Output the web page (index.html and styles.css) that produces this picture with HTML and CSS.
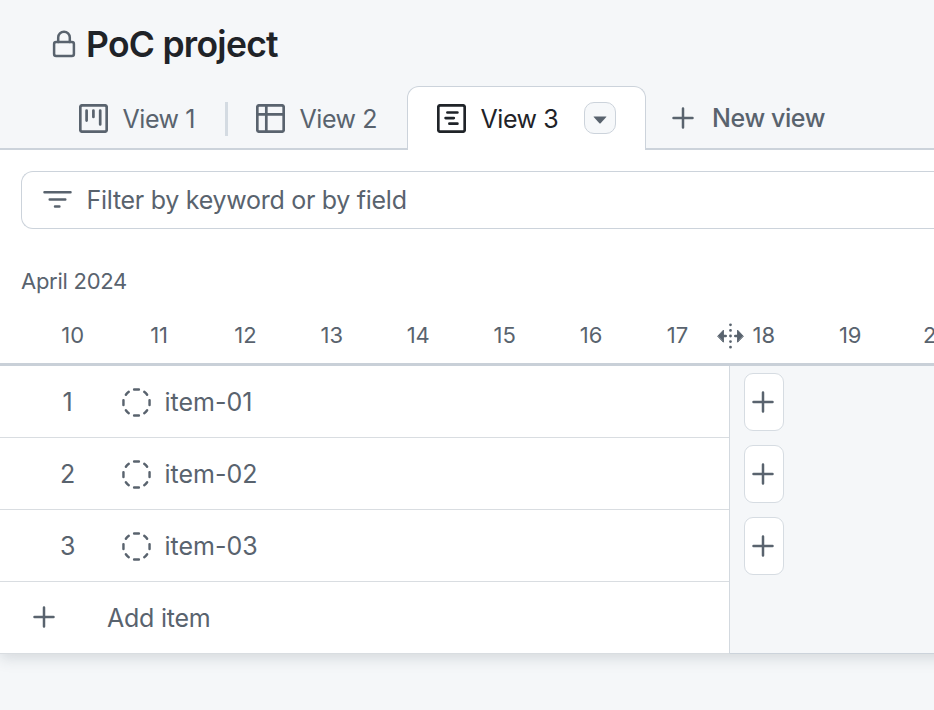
FILE: index.html
```html
<!DOCTYPE html>
<html lang="en">
<head>
<meta charset="utf-8">
<title>PoC project</title>
<link rel="stylesheet" href="styles.css">
</head>
<body>
<svg class="defs" width="0" height="0">
  <symbol id="plus" viewBox="0 0 22 22"><path d="M11 1.5v19M1.5 11h19"/></symbol>
  <symbol id="draft" viewBox="0 0 30 30">
    <path d="M12.5 1.5h5M12.5 28.5h5M1.5 12.5v5M28.5 12.5v5M4 7Q5.2 5.2 7 4M23 4Q24.8 5.2 26 7M4 23Q5.2 24.8 7 26M26 23Q24.8 24.8 23 26"/>
  </symbol>
</svg>
<header class="header">
  <h1 class="title">
    <svg class="icon lock" viewBox="0 0 24 28"><rect x="2.1" y="11.9" width="19.8" height="14.1" rx="2"/><path d="M6.2 12V7.5a5.8 5.8 0 0 1 11.6 0V12"/></svg>
    <span class="title-text">PoC project</span>
  </h1>
  <nav class="tabs">
    <a class="tab tab-first">
      <svg class="icon view-icon" viewBox="0 0 29 29"><rect x="1.3" y="1.3" width="26.4" height="26.4" rx="2"/><path d="M7.6 6.6v10M14.4 6.6v6.4M21.2 6.6v13.8"/></svg>
      <span class="label">View 1</span>
    </a>
    <span class="divider"></span>
    <a class="tab tab-second">
      <svg class="icon view-icon" viewBox="0 0 29 29"><rect x="1.3" y="1.3" width="26.4" height="26.4" rx="2"/><path d="M10.3 1.5v26M1.5 10.3h26"/></svg>
      <span class="label">View 2</span>
    </a>
    <a class="tab tab-active">
      <svg class="icon view-icon" viewBox="0 0 29 29"><rect x="1.3" y="1.3" width="26.4" height="26.4" rx="2"/><path d="M10.4 8.5h10M8.6 14.1h8.2M12.4 19.7h8"/></svg>
      <span class="label">View 3</span>
      <span class="caret"><svg viewBox="0 0 14 8"><path d="M1 .5h12q.8 0 .3.6L7.6 7.2q-.6.6-1.2 0L.7 1.100Q.2.5 1 .5Z"/></svg></span>
    </a>
    <a class="tab tab-new">
      <svg class="icon plus"><use href="#plus"/></svg>
      <span class="label label-new">New view</span>
    </a>
  </nav>
</header>
<main class="board">
  <div class="filter">
    <svg class="icon filter-icon" viewBox="0 0 30 20"><path d="M1.5 2h27M6.900 9.500h16.200M12.400 16.700h4.600"/></svg>
    <span class="filter-text">Filter by keyword or by field</span>
  </div>
  <div class="month">April 2024</div>
  <div class="days">
    <span>10</span><span>11</span><span>12</span><span>13</span><span>14</span><span>15</span><span>16</span><span>17</span><span>18</span><span>19</span><span>20</span>
    <svg class="resize" viewBox="0 0 27 28">
      <path class="heads" d="M.9 14 6.400 8.200V19.800ZM26.100 14 20.600 8.200V19.800Z"/>
      <path class="stem" d="M6 14h2.700M21 14h-2.700"/>
      <path class="dots" d="M13.500 2.800v23"/>
    </svg>
  </div>
  <div class="table">
    <div class="items">
      <div class="row"><span class="num">1</span><svg class="icon draft"><use href="#draft"/></svg><span class="name">item-01</span></div>
      <div class="row"><span class="num">2</span><svg class="icon draft"><use href="#draft"/></svg><span class="name">item-02</span></div>
      <div class="row"><span class="num">3</span><svg class="icon draft"><use href="#draft"/></svg><span class="name">item-03</span></div>
      <div class="row add"><svg class="icon plus"><use href="#plus"/></svg><span class="add-text">Add item</span></div>
    </div>
    <div class="timeline">
      <span class="add-date"><svg class="icon plus"><use href="#plus"/></svg></span>
      <span class="add-date"><svg class="icon plus"><use href="#plus"/></svg></span>
      <span class="add-date"><svg class="icon plus"><use href="#plus"/></svg></span>
    </div>
  </div>
</main>
</body>
</html>
```
FILE: styles.css
```css
* { box-sizing: border-box; }
body {
  margin: 0;
  width: 934px;
  height: 710px;
  overflow: hidden;
  background: #f5f7f9;
  color: #59636e;
  font: 25px/32px Inter, "Liberation Sans", sans-serif;
  white-space: nowrap;
}
.defs { display: none; }
.icon {
  display: block;
  flex: none;
  fill: none;
  stroke: #59636e;
  stroke-width: 2.7;
  stroke-linecap: round;
  stroke-linejoin: round;
}
.header { height: 150px; display: flex; flex-direction: column; }
.title {
  display: flex;
  align-items: center;
  margin: 0;
  height: 86px;
  padding-left: 52px;
  color: #1f2328;
  font-size: 35.5px;
  font-weight: 600;
}
.title-text { margin: 3px 0 0 10px; letter-spacing: -.73px; }
.lock { width: 24px; height: 28px; stroke-width: 2.5; margin-top: 2px; }
.tabs { display: flex; height: 64px; }
.tab { display: flex; align-items: center; height: 64px; padding-top: 1px; border-bottom: 2px solid #ccd3db; }
.tab-first { width: 225px; padding-left: 79px; }
.view-icon { width: 29px; height: 29px; margin-top: 1px; }
.label { margin-left: 14.4px; margin-top: 2px; letter-spacing: -.4px; }
.divider { width: 3px; border-bottom: 2px solid #ccd3db; background: linear-gradient(#d4dbe2, #d4dbe2) 0 16px / 3px 34px no-repeat; }
.tab-second { width: 179px; padding-left: 28px; }
.tab-active {
  width: 239px;
  padding: 0 0 1px 29px;
  background: #fff;
  color: #1f2328;
  border: 1px solid #ccd3db;
  border-bottom: 0;
  border-radius: 12px 12px 0 0;
}
.tab-active .icon { stroke: #1f2328; }
.caret {
  display: flex;
  align-items: center;
  justify-content: center;
  width: 32px;
  height: 32px;
  margin-left: auto;
  margin-right: 29px;
  background: #f6f8fa;
  border: 1px solid #ccd3db;
  border-radius: 10px;
}
.caret svg { width: 14px; height: 8px; margin-top: 3px; fill: #59636e; }
.tab-new { flex: 1; padding-left: 26px; font-weight: 500; }
.plus { width: 22px; height: 22px; stroke-width: 2.5; }
.label-new { margin: 0 0 0 18px; }
.board { width: 980px; height: 504px; background: #fff; padding-top: 21px; box-shadow: 0 4px 14px rgba(50, 65, 80, .17); clip-path: inset(0 0 -30px 0); }
.filter {
  display: flex;
  align-items: center;
  height: 58px;
  margin-left: 21px;
  padding-left: 21px;
  border: 1px solid #ccd3db;
  border-right: 0;
  border-radius: 12px 0 0 12px;
}
.filter-icon { width: 29px; height: 20px; stroke-width: 2.5; }
.filter-text { margin-left: 14.5px; letter-spacing: -.28px; }
.month { margin: 36px 0 0 21px; font-size: 22px; letter-spacing: -.27px; }
.days { position: relative; display: flex; height: 71px; margin-top: -2px; padding: 24px 0 0 29.5px; border-bottom: 3px solid #c9d0d8; font-size: 22px; overflow: hidden; }
.days span { flex: 0 0 86.4px; text-align: center; }
.resize { position: absolute; left: 717px; top: 27px; width: 27px; height: 28px; fill: #59636e; stroke: #59636e; stroke-linecap: round; stroke-linejoin: round; }
.heads { stroke-width: 1; }
.stem { stroke-width: 2.6; }
.dots { stroke-width: 2.8; stroke-dasharray: 0 5.6; }
.table { display: flex; height: 288px; }
.items { width: 730px; border-right: 1px solid #d3d9df; }
.row { display: flex; align-items: center; height: 72px; border-bottom: 1px solid #d9dde1; }
.num { width: 15px; margin-left: 60px; text-align: center; }
.draft { width: 29px; height: 29px; margin: 2px 0 0 46.5px; stroke-width: 2.5; }
.name { margin-left: 14px; }
.add { padding-left: 33px; }
.add .plus { margin-top: -1px; }
.add-text { margin-left: 52px; letter-spacing: -.25px; }
.timeline { flex: 1; display: flex; flex-direction: column; gap: 14px; padding: 7px 0 0 14px; background: #f5f7f9; border-bottom: 1px solid #ccd3db; }
.add-date { display: flex; align-items: center; width: 40px; height: 58px; padding-left: 7px; background: #fff; border: 1px solid #d6dce2; border-radius: 9px; }
```
